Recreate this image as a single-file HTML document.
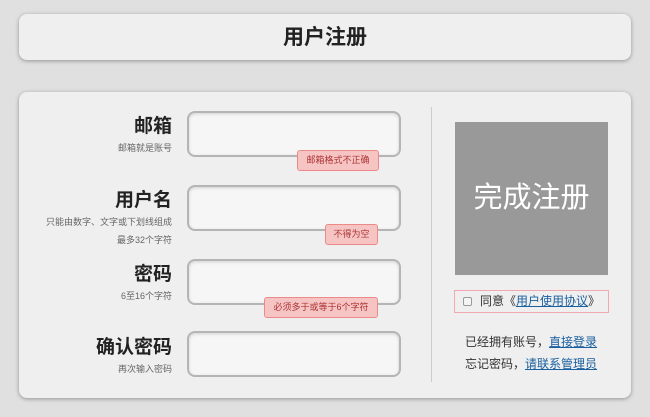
<!DOCTYPE html>
<html><head><meta charset="utf-8"><style>
*{margin:0;padding:0;box-sizing:border-box}
body{width:650px;height:417px;background:#e0e0e0;font-family:"Liberation Sans","Noto Sans CJK SC",sans-serif;position:relative;overflow:hidden}
.box{position:absolute;left:19px;width:612px;background:#efefef;border-radius:8px;box-shadow:0 1px 4px rgba(0,0,0,.35)}
.hd{top:14px;height:46px;text-align:center;font-size:21px;font-weight:bold;line-height:48px;color:#222}
.main{top:92px;height:306px}
.lbl{position:absolute;right:459px;text-align:right;color:#222}
.lbl b{display:block;font-size:19px;line-height:24px}
.lbl s{display:block;text-decoration:none;font-size:9px;color:#666;line-height:18px}
.inp{position:absolute;left:168px;width:214px;height:46px;border:2px solid #b5b5b5;border-radius:8px;background:#f6f6f6;box-shadow:inset 0 1px 3px rgba(0,0,0,.15)}
.tip{position:absolute;height:21px;background:#f7c4c4;border:1px solid #ec8a8a;border-radius:3px;color:#a33;font-size:9px;line-height:19px;text-align:center}
.div{position:absolute;left:412px;top:15px;width:1px;height:275px;background:#ccc}
.btn{position:absolute;left:436px;top:30px;width:153px;height:153px;background:#999;color:#fff;font-size:29px;text-align:center;line-height:153px}
.agree{position:absolute;left:435px;top:198px;width:155px;height:23px;border:1px solid #f2a8b0;font-size:12px;color:#333;line-height:21px;padding-left:8px}
.agree i{display:inline-block;width:9px;height:9px;border:1px solid #999;background:#f4f4f4;border-radius:2px;margin-right:8px;vertical-align:-1px}
a{color:#1a5fa0;text-decoration:underline}
.txt{position:absolute;left:446px;font-size:12px;color:#333}
</style></head><body>
<div class="box hd">用户注册</div>
<div class="box main">
<div class="lbl" style="top:23px"><b>邮箱</b><s>邮箱就是账号</s></div>
<div class="inp" style="top:19px"></div>
<div class="tip" style="left:278px;top:58px;width:82px">邮箱格式不正确</div>
<div class="lbl" style="top:97px"><b>用户名</b><s>只能由数字、文字或下划线组成</s><s>最多32个字符</s></div>
<div class="inp" style="top:93px"></div>
<div class="tip" style="left:306px;top:132px;width:53px">不得为空</div>
<div class="lbl" style="top:171px"><b>密码</b><s>6至16个字符</s></div>
<div class="inp" style="top:167px"></div>
<div class="tip" style="left:245px;top:205px;width:114px">必须多于或等于6个字符</div>
<div class="lbl" style="top:244px"><b>确认密码</b><s>再次输入密码</s></div>
<div class="inp" style="top:239px"></div>
<div class="div"></div>
<div class="btn">完成注册</div>
<div class="agree"><i></i>同意《<a>用户使用协议</a>》</div>
<div class="txt" style="top:241px">已经拥有账号，<a>直接登录</a></div>
<div class="txt" style="top:263px">忘记密码，<a>请联系管理员</a></div>
</div>
</body></html>
